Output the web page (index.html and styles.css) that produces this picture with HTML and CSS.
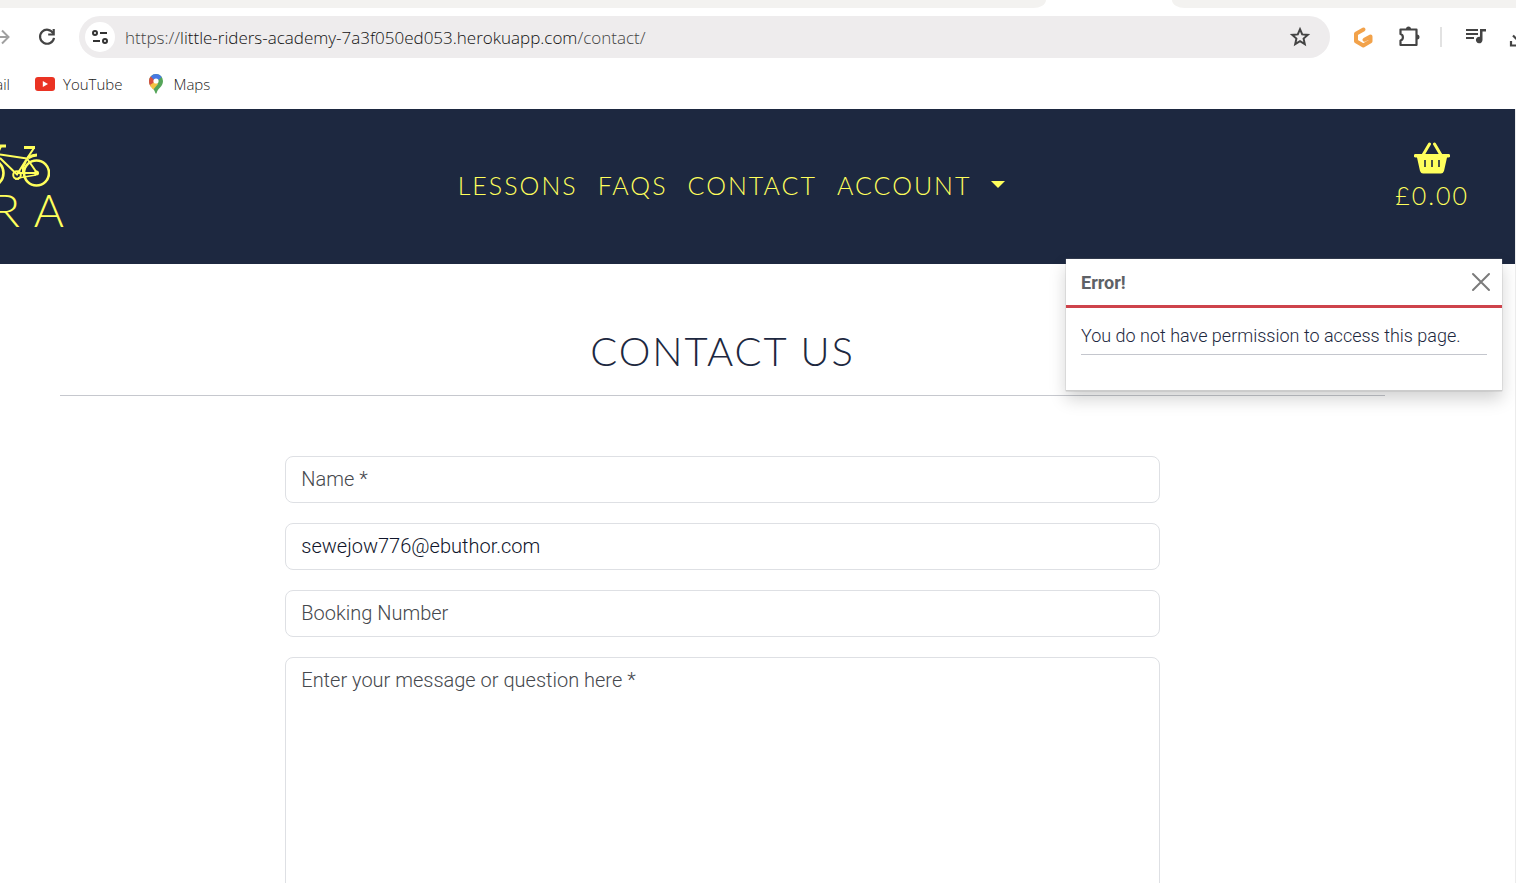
FILE: index.html
```html
<!DOCTYPE html>
<html lang="en">
<head>
<meta charset="utf-8">
<title>Contact Us</title>
<link rel="stylesheet" href="styles.css">
</head>
<body>
<div class="browser">
  <div class="tabstrip"><div class="tabs-before"></div><div class="tab-active"></div><div class="tabs-after"></div></div>
  <div class="toolbar">
    <div class="history">
      <button class="tool forward" aria-label="Forward"><svg width="24" height="24" viewBox="0 0 24 24" fill="none" stroke="#a0a0a0" stroke-width="2"><path d="M6 12h15M15 5.500l6.500 6.500-6.500 6.500"/></svg></button>
      <button class="tool" aria-label="Reload"><svg width="24" height="24" viewBox="0 0 24 24"><path d="M18.300 8.500A7 7 0 1 0 19 12.800" fill="none" stroke="#444" stroke-width="2.200"/><path d="M19.800 4v6.600h-6.600V8.500h4.400V4z" fill="#444"/></svg></button>
    </div>
    <div class="omnibox">
      <button class="site-info" aria-label="Site information"><svg width="18" height="18" viewBox="0 0 18 18" fill="none" stroke="#333" stroke-width="2"><circle cx="4" cy="5" r="2"/><path d="M9 5h7M2 13h7"/><circle cx="14" cy="13" r="2"/></svg></button>
      <div class="url"><span>https://</span>little-riders-academy-7a3f050ed053.herokuapp.com<span>/contact/</span></div>
      <button class="tool" aria-label="Bookmark"><svg width="24" height="24" viewBox="0 0 24 24" fill="none" stroke="#444" stroke-width="2"><path d="M12 4.200l2.200 5.200 5.600.5-4.200 3.700 1.200 5.500-4.800-2.900-4.800 2.900 1.200-5.500-4.200-3.700 5.600-.5z"/></svg></button>
    </div>
    <div class="extensions">
      <button class="tool" aria-label="Extension G"><svg width="24" height="24" viewBox="0 0 24 24" fill="none" stroke="#f2a24a" stroke-width="4" stroke-linejoin="round" stroke-linecap="round"><path d="M11.500 4.500L4 8.800v7.400l7.300 4.200 7.200-4.200v-4.700l-6 3.200"/></svg></button>
      <button class="tool" aria-label="Extensions"><svg width="24" height="24" viewBox="0 0 24 24"><path d="M4.500 4.500h16v15.500h-16v-4.500c3.200-1 3.200-5.500 0-6.500z" fill="none" stroke="#444" stroke-width="2.200" stroke-linejoin="round"/><path d="M10 4a2.500 2.500 0 0 1 5 0zM21 9.500a2.500 2.500 0 0 1 0 5z" fill="#444"/></svg></button>
      <span class="divider"></span>
      <button class="tool" aria-label="Media"><svg width="24" height="24" viewBox="0 0 24 24" fill="#444"><path d="M4 4h12v2H4zM4 8h12v2H4zM4 12h8v2H4z"/><path d="M18 4h6v2.500h-3.500V15a3.300 3.300 0 1 1-2.500-3.200z"/></svg></button>
      <button class="tool" aria-label="Downloads"><svg width="24" height="24" viewBox="0 0 24 24" fill="none" stroke="#444" stroke-width="2.200"><path d="M5 16v4.500h14V16M12 4v11M7 10.500l5 5 5-5"/></svg></button>
    </div>
  </div>
  <nav class="bookmarks" aria-label="Bookmarks">
    <a class="clipped" href="#">Gmail</a>
    <a href="#"><svg width="20" height="14" viewBox="0 0 20 14"><rect width="20" height="14" rx="3" fill="#ea3323"/><path d="M7.800 4v6l5.200-3z" fill="#fff"/></svg>YouTube</a>
    <a href="#"><svg width="18" height="20" viewBox="0 0 18 20"><g transform="translate(1)"><path d="M1 7a7 7 0 0 1 14 0c0 6-5.500 7-6.500 12.500h-1C6.500 14 1 13 1 7z" fill="#55a559"/><path d="M3 2.200L8 7l-5.300 5.500C1.500 11 1 9 1 7c0-2 .8-3.600 2-4.800z" fill="#d9503f"/><path d="M2 11l6-4 2 3-4.700 5.500C4 14 2.600 12.800 2 11z" fill="#f5c243"/><path d="M2.800 2.400A7 7 0 0 1 13.700 2.900L8 8z" fill="#4779e4"/><circle cx="8" cy="7" r="2.600" fill="#fff"/></g></svg>Maps</a>
  </nav>
</div>
<div class="page">
  <header class="site-header">
    <a class="logo" href="#" aria-label="LRA home">
      <svg class="bike" width="84" height="44" viewBox="-34 0 84 44" fill="none" stroke="#ffff5c" stroke-width="2"><circle cx="-10" cy="29" r="13.500" stroke-width="2.600"/><circle cx="36.500" cy="29" r="12.500" stroke-width="2.600"/><path d="M-10 29L1 2M0 10.500l27 4-10 16L0 14M27 14.500l10 14.500H17M34 4L27 14.500l-4 9v5"/><path d="M0 2h6M24 3.500h11M28 14c3-2 5-3 9-3" stroke-width="2.800"/><circle cx="17" cy="31" r="3.800"/><path d="M18 34l18-3M15 35h4" stroke-width="1.500"/><circle cx="36.500" cy="29" r="1.500"/></svg>
      <span class="initials"><span>L</span><span>R</span><span>A</span></span>
    </a>
    <nav class="menu" aria-label="Main">
      <a href="#">LESSONS</a><a href="#">FAQS</a><a href="#">CONTACT</a>
      <a class="account" href="#">ACCOUNT<svg width="14" height="7" viewBox="0 0 14 7"><path d="M0 0h14L7 7z" fill="#ffff5c"/></svg></a>
    </nav>
    <a class="basket" href="#">
      <svg width="36" height="32" viewBox="0 0 36 32"><path d="M15.500 2L9 13M20.500 2L27 13" stroke="#ffff5c" stroke-width="3" stroke-linecap="round"/><path fill="#ffff5c" d="M1.500 12h33a1.500 1.500 0 0 1 0 3.500H33L30 29q-1 2.500-3 2.500H9q-2 0-3-2.500L3 15.500H1.500a1.500 1.500 0 0 1 0-3.500z"/><path d="M11 18v7M18 18v7M25 18v7" stroke="#1d2840" stroke-width="1.600"/></svg>
      <span>£0.00</span>
    </a>
  </header>
  <section class="toast" role="alert">
    <div class="toast-head"><strong>Error!</strong><button class="close" aria-label="Close"><svg width="20" height="20" viewBox="0 0 20 20" stroke="#7b7b7b" stroke-width="2" stroke-linecap="round"><path d="M2 2l16 16M18 2L2 18"/></svg></button></div>
    <div class="toast-body"><p>You do not have permission to access this page.</p></div>
  </section>
  <main class="content">
    <h1>CONTACT US</h1>
    <form class="contact">
      <input type="text" aria-label="Name" placeholder="Name *">
      <input type="email" aria-label="Email" value="sewejow776@ebuthor.com">
      <input type="text" aria-label="Booking Number" placeholder="Booking Number">
      <textarea aria-label="Message" placeholder="Enter your message or question here *" rows="10"></textarea>
    </form>
  </main>
</div>
</body>
</html>
```
FILE: styles.css
```css
* { box-sizing: border-box; }
html { height: 100%; }
body { margin: 0; height: 100%; overflow: hidden; display: flex; flex-direction: column; background: #fff; font-family: Roboto, sans-serif; }
a { text-decoration: none; color: inherit; }
button { border: 0; padding: 0; background: none; cursor: pointer; }
svg { display: block; flex: none; }

.browser { flex: none; font-family: "Open Sans", sans-serif; }
.tabstrip { display: flex; height: 8px; }
.tabs-before { width: 69%; background: #f3f2f0; border-bottom-right-radius: 16px 10px; }
.tab-active { width: 126px; }
.tabs-after { flex: 1; background: #f3f2f0; border-bottom-left-radius: 16px 10px; }
.toolbar { display: flex; align-items: center; padding-top: 8px; }
.tool { width: 24px; height: 24px; flex: none; }
.history { display: flex; width: 79px; gap: 24px; justify-content: flex-end; padding-right: 20px; overflow: hidden; }
.omnibox { flex: 1; display: flex; align-items: center; height: 42px; padding: 0 18px 0 6px; background: #eeeced; border-radius: 21px; }
.site-info { width: 30px; height: 30px; border-radius: 50%; background: #fff; display: grid; place-items: center; }
.url { flex: 1; margin-left: 10px; font-size: 17px; font-weight: 300; color: #111; }
.url span { color: #444; }
.extensions { display: flex; align-items: center; gap: 20px; width: 186px; padding-left: 22px; overflow: hidden; }
.divider { width: 2px; height: 20px; background: #e2e2e2; flex: none; }
.bookmarks { display: flex; align-items: center; gap: 25px; height: 51px; font-size: 15px; font-weight: 300; color: #222; }
.bookmarks a { display: flex; align-items: center; gap: 8px; }
.bookmarks .clipped { width: 10px; overflow: hidden; justify-content: flex-end; }

.page { position: relative; flex: 1; min-height: 0; overflow: hidden; border-right: 1px solid #ececec; }
.site-header { display: flex; align-items: center; justify-content: space-between; height: 155px; padding: 0 46px 4px 0; background: #1d2840; color: #ffff5c; font-family: Lato, sans-serif; font-weight: 300; font-size: 25px; letter-spacing: 2px; }
.logo { display: flex; flex-direction: column; align-items: flex-end; width: 64px; padding-top: 6px; overflow: hidden; }
.bike { margin-right: 14px; }
.initials { display: flex; gap: 14px; font-size: 46px; line-height: 44px; letter-spacing: 0; }
.menu { display: flex; gap: 20px; padding-left: 4px; }
.account { display: flex; align-items: center; gap: 20px; }
.basket { display: flex; flex-direction: column; align-items: center; gap: 6px; line-height: 30px; padding-bottom: 18px; }

.toast { position: absolute; top: 150px; right: 13px; width: 436px; background: #fff; border-bottom: 1px solid #ccc; box-shadow: 0 8px 16px rgba(0, 0, 0, .18), 0 0 1px #999; color: #1d2840; font-size: 18px; font-weight: 300; }
.toast-head { display: flex; align-items: center; justify-content: space-between; height: 49px; padding: 0 11px 0 15px; border-bottom: 3px solid #ce434b; color: #5e6166; }
.toast-head strong { font-weight: 700; }
.toast-body { padding: 15px 15px 35px; }
.toast-body p { margin: 0; line-height: 26px; padding-bottom: 5px; border-bottom: 1px solid #c4c6cd; }

.content { padding: 60px 130px 0 60px; }
h1 { margin: 0 0 60px; padding-bottom: 16px; border-bottom: 1px solid #c6c8ce; text-align: center; font: 300 40px/55px Lato, sans-serif; letter-spacing: 2px; color: #1d2840; }
.contact { display: flex; flex-direction: column; gap: 20px; width: 66%; margin: 0 auto; }
.contact input, .contact textarea { width: 100%; border: 1px solid #dee0e4; border-radius: 8px; padding: 8px 15px; font: 300 20px/29px Roboto, sans-serif; color: #10152b; background: #fff; resize: none; }
.contact ::placeholder { color: #45484d; opacity: 1; }
```
